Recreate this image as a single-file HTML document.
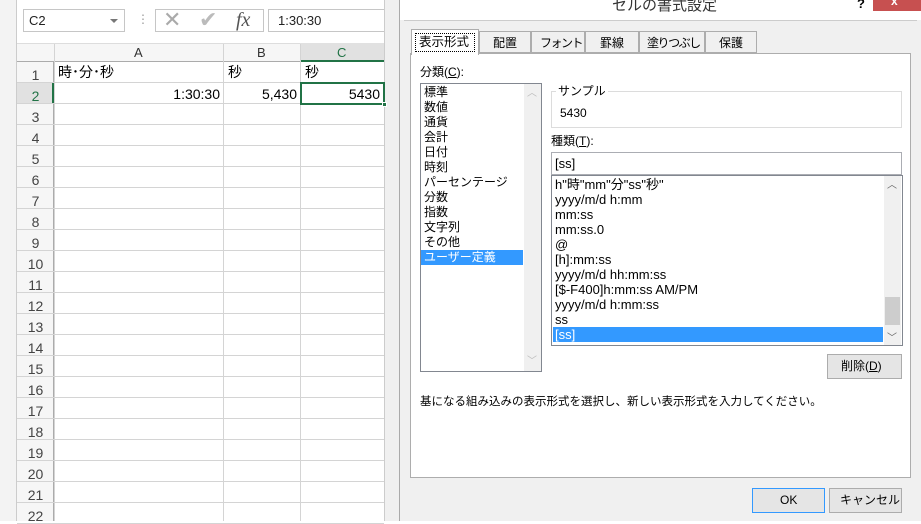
<!DOCTYPE html>
<html><head><meta charset="utf-8"><style>
*{margin:0;padding:0;box-sizing:border-box}
body{width:921px;height:521px;overflow:hidden;position:relative;background:#fff;font-family:"Liberation Sans","Noto Sans CJK JP",sans-serif;font-size:12px;color:#000}
.a{position:absolute}
.t{position:absolute;white-space:nowrap;line-height:15px}
.tb{font-size:12px}
</style></head><body>
<div class="a" style="left:0;top:0;width:400px;height:521px;background:#fff"></div>
<div class="a" style="left:0;top:0;width:17px;height:521px;background:#f3f3f3;border-right:1px solid #ccc"></div>
<div class="a" style="left:17px;top:0;width:383px;height:44px;background:#fff"></div>
<div class="a" style="left:23px;top:9px;width:102px;height:23px;border:1px solid #c6c6c6;background:#fff"></div>
<div class="t" style="left:29px;top:13px;font-size:13px;color:#222">C2</div>
<div class="a" style="left:110px;top:19px;border-left:4px solid transparent;border-right:4px solid transparent;border-top:4px solid #777"></div>
<div class="t" style="left:137px;top:12px;color:#999">⋮</div>
<div class="a" style="left:155px;top:9px;width:109px;height:23px;border:1px solid #c6c6c6;background:#fff"></div>
<div class="t" style="left:163px;top:7px;font-size:22px;color:#aaa;line-height:26px">✕</div>
<div class="t" style="left:199px;top:7px;font-size:22px;color:#bbb;line-height:26px">✔</div>
<div class="t" style="left:236px;top:8px;font-size:20px;color:#555;font-family:'Liberation Serif',serif;font-style:italic;line-height:24px">fx</div>
<div class="a" style="left:268px;top:9px;width:132px;height:23px;border:1px solid #c6c6c6;background:#fff"></div>
<div class="t" style="left:278px;top:13px;font-size:13px;color:#222">1:30:30</div>
<div class="a" style="left:17px;top:43px;width:367px;height:19px;background:#f6f6f6;border-bottom:1px solid #ababab;border-top:1px solid #ddd"></div>
<div class="a" style="left:300px;top:43px;width:84px;height:19px;background:#e1e1e1;border-bottom:2px solid #217346"></div>
<div class="t" style="left:134px;top:45px;font-size:13px;color:#333">A</div>
<div class="t" style="left:257px;top:45px;font-size:13px;color:#333">B</div>
<div class="t" style="left:337px;top:45px;font-size:13px;color:#217346">C</div>
<div class="a" style="left:17px;top:62px;width:37px;height:459px;background:#f6f6f6;border-right:1px solid #ababab"></div>
<div class="a" style="left:17px;top:83px;width:37px;height:21px;background:#e1e1e1;border-right:2px solid #217346"></div>
<div id="g"></div>
<div class="a" style="left:384px;top:0;width:16px;height:521px;background:#f0f0f0;border-left:1px solid #ccc"></div>
<div class="t" style="left:58px;top:65px;font-size:14px">時･分･秒</div>
<div class="t" style="left:228px;top:65px;font-size:14px">秒</div>
<div class="t" style="left:305px;top:65px;font-size:14px">秒</div>
<div class="t" style="left:150px;top:87px;font-size:14px;width:70px;text-align:right">1:30:30</div>
<div class="t" style="left:226px;top:87px;font-size:14px;width:71px;text-align:right">5,430</div>
<div class="t" style="left:305px;top:87px;font-size:14px;width:75px;text-align:right">5430</div>
<div class="a" style="left:300px;top:82px;width:85px;height:23px;border:2px solid #217346"></div>
<div class="a" style="left:382px;top:102px;width:5px;height:5px;background:#217346;border:1px solid #fff"></div>
<div class="a" style="left:399px;top:0;width:522px;height:521px;background:#f0f0f0;border-left:1px solid #aaa"></div>
<div class="a" style="left:400px;top:0;width:521px;height:20px;background:#fff"></div>
<div class="t" style="left:612px;top:-3px;font-size:15px;color:#333;line-height:18px">セルの書式設定</div>
<div class="t" style="left:857px;top:-4px;font-size:13px;font-weight:bold">?</div>
<div class="a" style="left:873px;top:0;width:48px;height:11px;background:#c75050"></div>
<div class="t" style="left:891px;top:-6px;color:#fff;font-weight:bold">x</div>
<div class="a" style="left:404px;top:20px;width:513px;height:1px;background:#ccc"></div>
<div class="a" style="left:410px;top:53px;width:501px;height:425px;background:#fff;border:1px solid #adadad"></div>
<div class="a" style="left:411px;top:29px;width:68px;height:26px;background:#fff;border:1px solid #adadad;border-bottom:none"></div>
<div class="a" style="left:415px;top:33px;width:60px;height:19px;border:1px dotted #000"></div>
<div class="t tb" style="left:419px;top:35px;font-size:12.5px">表示形式</div>
<div class="a" style="left:479px;top:31px;width:52px;height:22px;background:#f0f0f0;border:1px solid #adadad"></div>
<div class="t tb" style="left:493px;top:36px">配置</div>
<div class="a" style="left:531px;top:31px;width:54px;height:22px;background:#f0f0f0;border:1px solid #adadad"></div>
<div class="t tb" style="left:540px;top:36px;letter-spacing:-1.5px">フォント</div>
<div class="a" style="left:585px;top:31px;width:54px;height:22px;background:#f0f0f0;border:1px solid #adadad"></div>
<div class="t tb" style="left:600px;top:36px">罫線</div>
<div class="a" style="left:639px;top:31px;width:66px;height:22px;background:#f0f0f0;border:1px solid #adadad"></div>
<div class="t tb" style="left:647px;top:36px;letter-spacing:-1.5px">塗りつぶし</div>
<div class="a" style="left:705px;top:31px;width:52px;height:22px;background:#f0f0f0;border:1px solid #adadad"></div>
<div class="t tb" style="left:719px;top:36px">保護</div>
<div class="t" style="left:420px;top:65px">分類(<u>C</u>):</div>
<div class="a" style="left:420px;top:83px;width:122px;height:289px;border:1px solid #828790;background:#fff"></div>
<div class="a" style="left:524px;top:84px;width:17px;height:287px;background:#f0f0f0"></div>
<div class="t" style="left:527px;top:86px;color:#bbb;font-size:10px">︿</div>
<div class="t" style="left:527px;top:354px;color:#bbb;font-size:10px">﹀</div>
<div class="a" style="left:421px;top:250px;width:102px;height:15px;background:#3399ff"></div>
<div class="t" style="left:424px;top:85px">標準<br>数値<br>通貨<br>会計<br>日付<br>時刻<br>パーセンテージ<br>分数<br>指数<br>文字列<br>その他<br><span style="color:#fff">ユーザー定義</span></div>
<div class="a" style="left:551px;top:91px;width:351px;height:37px;border:1px solid #dcdcdc"></div>
<div class="t" style="left:556px;top:84px;background:#fff;padding:0 2px">サンプル</div>
<div class="t" style="left:560px;top:106px">5430</div>
<div class="t" style="left:551px;top:134px">種類(<u>T</u>):</div>
<div class="a" style="left:551px;top:152px;width:351px;height:23px;border:1px solid #abadb3;background:#fff"></div>
<div class="t" style="left:555px;top:156px;font-size:13px">[ss]</div>
<div class="a" style="left:551px;top:175px;width:352px;height:171px;border:1px solid #828790;background:#fff"></div>
<div class="a" style="left:884px;top:176px;width:17px;height:169px;background:#f0f0f0"></div>
<div class="a" style="left:885px;top:297px;width:15px;height:28px;background:#cdcdcd"></div>
<div class="t" style="left:887px;top:178px;color:#666;font-size:10px">︿</div>
<div class="t" style="left:887px;top:331px;color:#666;font-size:10px">﹀</div>
<div class="a" style="left:553px;top:327px;width:330px;height:15px;background:#3399ff"></div>
<div class="t" style="left:555px;top:177px;font-size:13px">h"時"mm"分"ss"秒"<br>yyyy/m/d h:mm<br>mm:ss<br>mm:ss.0<br>@<br>[h]:mm:ss<br>yyyy/m/d hh:mm:ss<br>[$-F400]h:mm:ss AM/PM<br>yyyy/m/d h:mm:ss<br>ss<br><span style="color:#fff">[ss]</span></div>
<div class="a" style="left:827px;top:354px;width:75px;height:25px;background:#e5e5e5;border:1px solid #acacac"></div>
<div class="t" style="left:841px;top:359px">削除(<u>D</u>)</div>
<div class="t" style="left:420px;top:395px;font-size:11.5px">基になる組み込みの表示形式を選択し、新しい表示形式を入力してください。</div>
<div class="a" style="left:752px;top:488px;width:73px;height:25px;background:#e5e5e5;border:1px solid #3399ff"></div>
<div class="t" style="left:780px;top:493px">OK</div>
<div class="a" style="left:829px;top:488px;width:73px;height:25px;background:#e5e5e5;border:1px solid #acacac"></div>
<div class="t" style="left:840px;top:493px">キャンセル</div>
<script>
var g=document.getElementById('g'),h='';
for(var i=1;i<=22;i++){var y=62+(i-1)*21;
h+='<div class="a" style="left:17px;top:'+(y+20)+'px;width:367px;height:1px;background:#d4d4d4"></div>';
h+='<div class="t" style="left:17px;top:'+(y+6)+'px;width:37px;text-align:center;font-size:14px;color:'+(i==2?'#217346':'#444')+'">'+i+'</div>';}
[54,223,300].forEach(function(x){h+='<div class="a" style="left:'+x+'px;top:44px;width:1px;height:477px;background:#d4d4d4"></div>';});
g.innerHTML=h;
</script>
</body></html>
